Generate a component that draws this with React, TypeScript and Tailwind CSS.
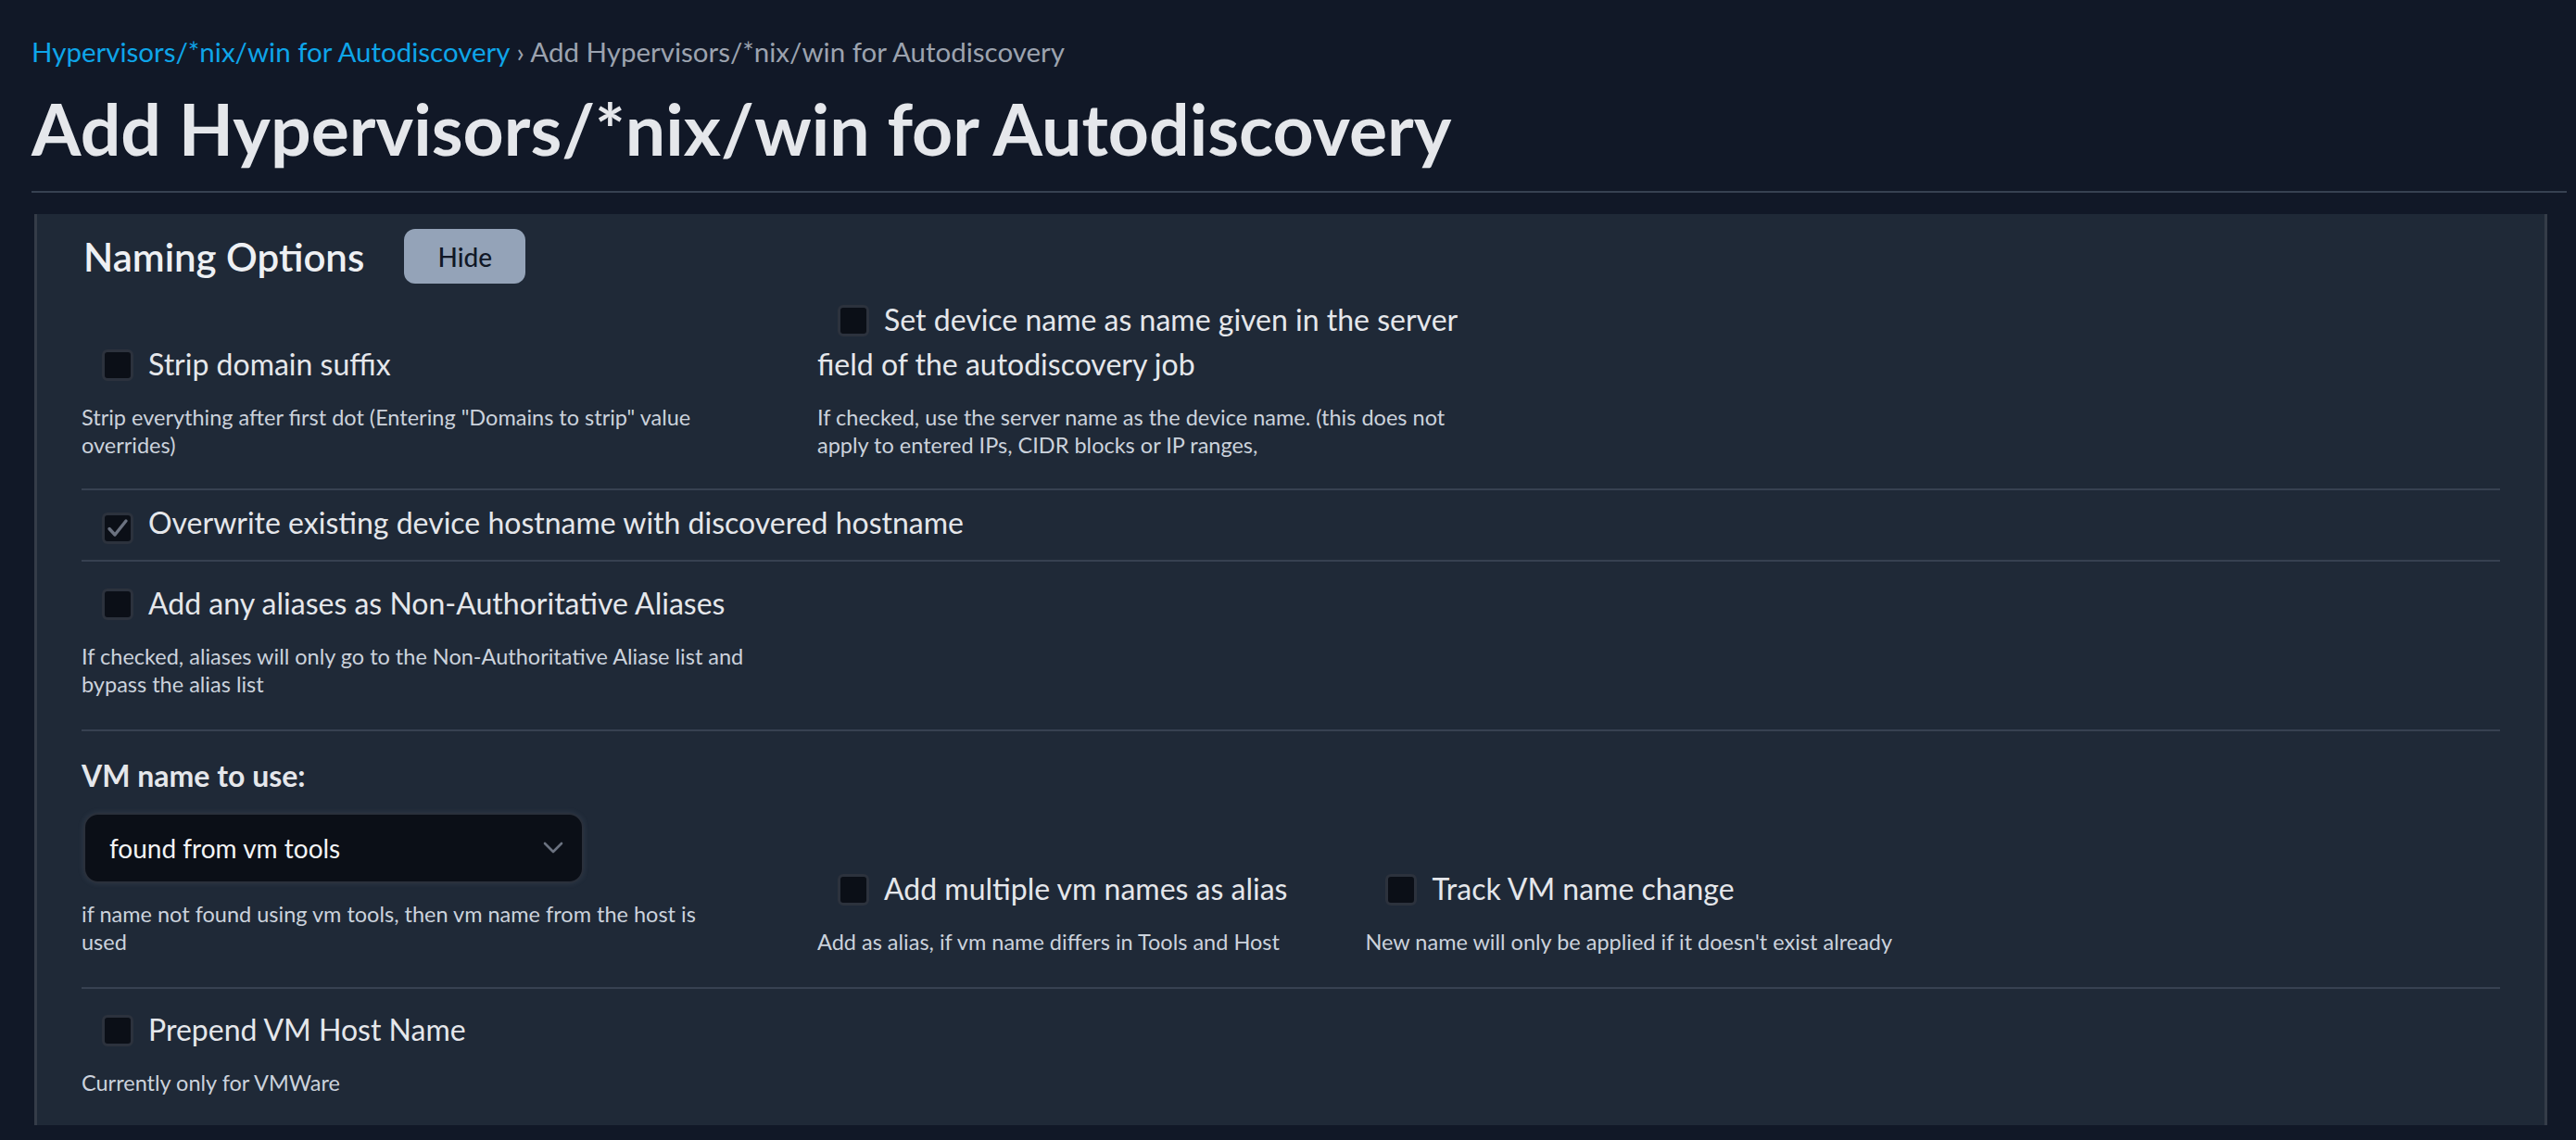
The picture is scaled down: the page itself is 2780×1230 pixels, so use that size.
import React from 'react';

type CheckProps = { checked?: boolean };

function Check({ checked }: CheckProps) {
  return (
    <span className="inline-flex items-center justify-center w-[34px] h-[34px] ml-[22px] mr-[16px] align-[-6px] rounded-[6px] border-[3px] border-[#2c323d] bg-[#0b0f17]">
      {checked && (
        <svg width="24" height="24" viewBox="0 0 24 24" fill="none">
          <path d="M3 12.5 L9 19 L21 4" stroke="#6b7280" strokeWidth="3.4" strokeLinecap="round" strokeLinejoin="round" />
        </svg>
      )}
    </span>
  );
}

function Label({ text, checked }: { text: string; checked?: boolean }) {
  return (
    <div className="text-[32px] leading-[48px] text-[#e5e7eb]">
      <Check checked={checked} />
      {text}
    </div>
  );
}

function Desc({ children }: { children: React.ReactNode }) {
  return <p className="mt-[18px] text-[23.5px] leading-[30px] text-[#cbd2dc]">{children}</p>;
}

export default function App() {
  return (
    <div className="min-h-screen bg-[#111827] pl-[34px] pr-[10px] pt-[38px] font-['Lato',sans-serif]">
      <div className="text-[29.5px] leading-[36px]">
        <span className="text-[#0ea5e9]">Hypervisors/*nix/win for Autodiscovery</span>
        <span className="text-[#9ca3af]"> › Add Hypervisors/*nix/win for Autodiscovery</span>
      </div>
      <h1 className="mt-[18px] text-[77px] leading-[92px] font-bold text-[#e5e7eb]">
        Add Hypervisors/*nix/win for Autodiscovery
      </h1>
      <div className="mt-[22px] h-[2px] bg-[#374151]" />

      <div className="mt-[23px] ml-[3px] mr-[21px] bg-[#1f2937] border-x-[3px] border-[#353c48] px-[48px] pt-[16px] pb-[31px]">
        <div className="flex items-center gap-[43px] pl-[2px]">
          <h2 className="text-[42px] leading-[48px] font-semibold text-[#eef0f3]">Naming Options</h2>
          <button className="w-[131px] h-[59px] rounded-[12px] bg-[#94a3b8] text-[28px] font-medium text-[#111827]">
            Hide
          </button>
        </div>

        <div className="flex items-end gap-x-[72px] pt-[15px] pb-[32px] border-b-2 border-[#374151]">
          <div className="w-[722px]">
            <Label text="Strip domain suffix" />
            <Desc>Strip everything after first dot (Entering "Domains to strip" value overrides)</Desc>
          </div>
          <div className="w-[722px]">
            <Label text="Set device name as name given in the server field of the autodiscovery job" />
            <Desc>
              If checked, use the server name as the device name. (this does not apply to entered IPs, CIDR blocks or IP
              ranges,
            </Desc>
          </div>
        </div>

        <div className="pt-[11px] pb-[16px] border-b-2 border-[#374151]">
          <Label text="Overwrite existing device hostname with discovered hostname" checked />
        </div>

        <div className="pt-[21px] pb-[34px] border-b-2 border-[#374151]">
          <div className="w-[730px]">
            <Label text="Add any aliases as Non-Authoritative Aliases" />
            <Desc>If checked, aliases will only go to the Non-Authoritative Aliase list and bypass the alias list</Desc>
          </div>
        </div>

        <div className="flex items-end gap-x-[84px] pt-[24px] pb-[34px] border-b-2 border-[#374151]">
          <div className="w-[710px]">
            <div className="text-[32px] leading-[48px] font-bold text-[#e5e7eb]">VM name to use:</div>
            <div className="mt-[16px] ml-[2px] w-[540px] h-[76px] flex items-center justify-between rounded-[16px] bg-[#0b0f17] border-2 border-[#2a303b] shadow-[0_0_6px_rgba(148,163,184,0.15)] pl-[26px] pr-[20px]">
              <span className="text-[28px] text-[#f3f4f6]">found from vm tools</span>
              <svg width="22" height="14" viewBox="0 0 22 14" fill="none">
                <path d="M2 2 L11 11 L20 2" stroke="#6b7280" strokeWidth="2.6" strokeLinecap="round" strokeLinejoin="round" />
              </svg>
            </div>
            <Desc>if name not found using vm tools, then vm name from the host is used</Desc>
          </div>
          <div>
            <Label text="Add multiple vm names as alias" />
            <Desc>Add as alias, if vm name differs in Tools and Host</Desc>
          </div>
          <div>
            <Label text="Track VM name change" />
            <Desc>New name will only be applied if it doesn't exist already</Desc>
          </div>
        </div>

        <div className="pt-[20px]">
          <Label text="Prepend VM Host Name" />
          <Desc>Currently only for VMWare</Desc>
        </div>
      </div>
    </div>
  );
}
